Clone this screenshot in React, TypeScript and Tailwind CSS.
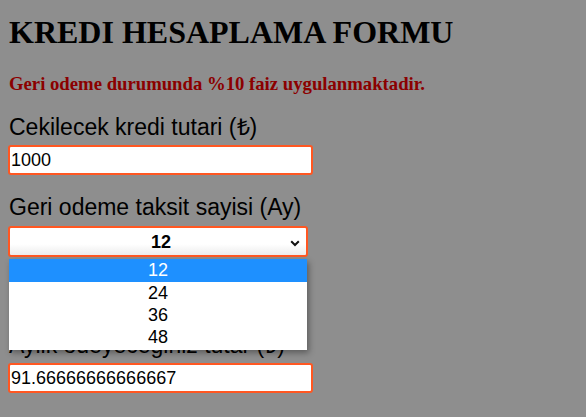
import React from "react";

export default function App() {
  const serif = { fontFamily: '"Liberation Serif", "Times New Roman", serif' };
  return (
    <div className="relative min-h-[417px] w-[586px] bg-[#8e8e8e] pl-[8px] text-black" style={{ fontFamily: '"Liberation Sans", Arial, sans-serif' }}>
      <div className="h-[14px]" />
      <h1 className="m-0 text-[32px] font-bold leading-[37px] pl-[1px]" style={serif}>KREDI HESAPLAMA FORMU</h1>
      <h3 className="mt-[22px] text-[18.72px] font-bold leading-[22px] text-[#8b0000] pl-[1px]" style={serif}>
        Geri odeme durumunda %10 faiz uygulanmaktadir.
      </h3>
      <div className="mt-[19px] text-[23px] leading-[26px] pl-[1px]">Cekilecek kredi tutari (₺)</div>
      <div className="mt-[5px] flex h-[30px] w-[305px] items-center rounded-[3px] border-2 border-[#ff5722] bg-white pl-[1px] text-[18px]">
        1000
      </div>
      <div className="mt-[19px] text-[23px] leading-[26px] pl-[1px]">Geri odeme taksit sayisi (Ay)</div>
      <div className="relative mt-[6px] flex h-[31px] w-[300px] items-center justify-center rounded-[3px] border-2 border-[#ff5722] bg-gradient-to-b from-white from-60% to-[#ececec] pt-[2px] text-[18px] font-bold">
        <span className="pl-[6px]">12</span>
        <svg className="absolute right-[6px] top-[12px]" width="10" height="7" viewBox="0 0 10 7">
          <path d="M1.2 1.2 L5 5 L8.8 1.2" fill="none" stroke="#111" strokeWidth="2" />
        </svg>
      </div>
      <div className="mt-[75px] text-[23px] leading-[26px] pl-[1px]">Aylik odeyeceginiz tutar (₺)</div>
      <div className="mt-[5px] flex h-[30px] w-[305px] items-center rounded-[3px] border-2 border-[#ff5722] bg-white pl-[1px] text-[18px]">
        91.66666666666667
      </div>

      <div className="absolute left-[9px] top-[259px] w-[298px] bg-white pb-[2px] text-center text-[18px] leading-[22px] shadow-[2px_3px_6px_rgba(0,0,0,0.35)]">
        <div className="h-[23px] bg-[#1e90ff] text-white">12</div>
        <div className="h-[22px]">24</div>
        <div className="h-[22px]">36</div>
        <div className="h-[22px]">48</div>
      </div>
    </div>
  );
}
